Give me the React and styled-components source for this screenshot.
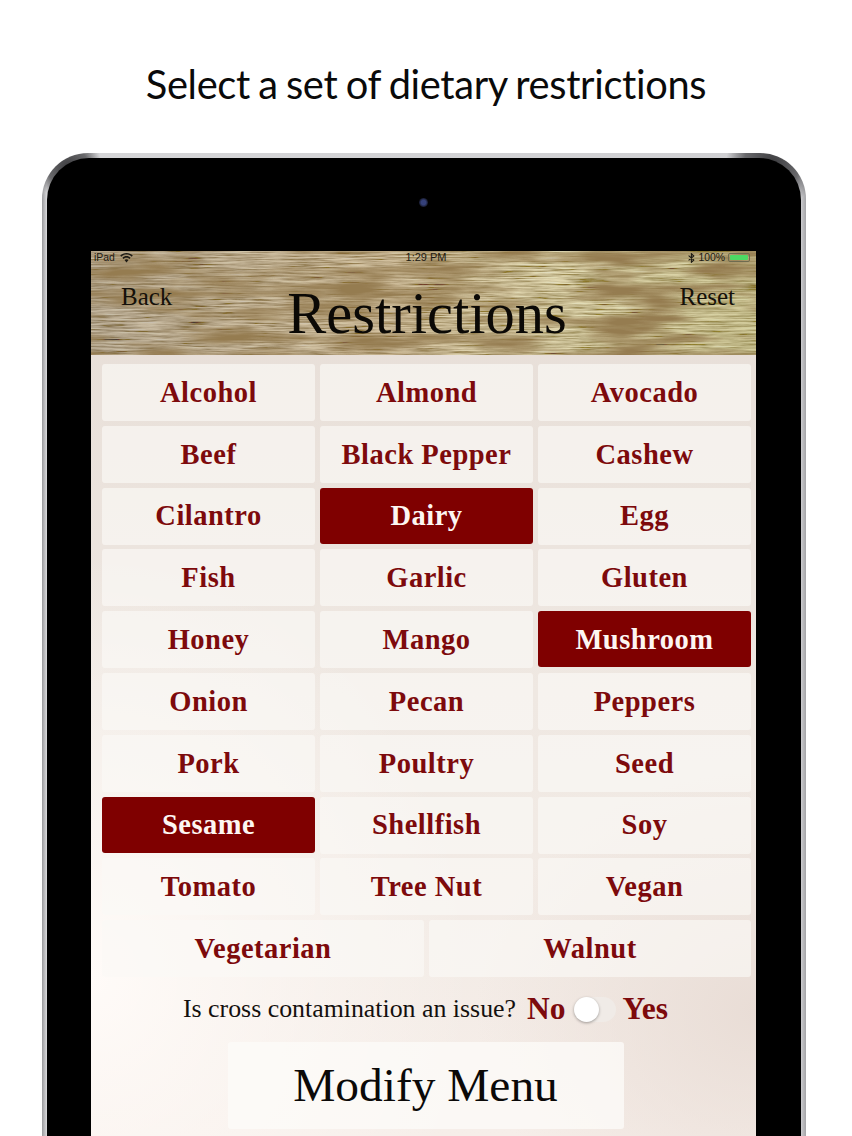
import React from "react";
import styled, { createGlobalStyle } from "styled-components";

const Global = createGlobalStyle`
  html, body { margin: 0; padding: 0; height: 1136px; overflow: hidden; background: #fff; }
  * { box-sizing: border-box; }
`;

const Page = styled.div`
  width: 852px;
  height: 1136px;
  overflow: hidden;
  background: #fff;
  display: flex;
  flex-direction: column;
  padding-left: 42px;
`;

const Caption = styled.h1`
  margin: 0 0 0 -42px;
  width: 852px;
  height: 153px;
  padding: 58px 0 0 0;
  font: 400 39.8px/52px Lato, sans-serif;
  letter-spacing: -0.35px;
  word-spacing: -1.5px;
  color: #0a0a0a;
  text-align: center;
`;

const Bezel = styled.div`
  width: 764px;
  flex: 1;
  padding: 5px 5px 0;
  border-radius: 46px 46px 0 0;
  background:
    radial-gradient(circle 34px at 26px 14px, #3c3c3f 0, rgba(60,60,63,0.7) 60%, rgba(60,60,63,0) 100%),
    radial-gradient(circle 46px at 730px 10px, #3c3c3f 0, rgba(60,60,63,0.7) 60%, rgba(60,60,63,0) 100%),
    linear-gradient(90deg, #9a9a9d 0, #d6d6d8 0.6%, #cfcfd2 99.3%, #a4a4a7 100%);
`;

const Body = styled.div`
  height: 100%;
  background: #000;
  border-radius: 42px 42px 0 0;
  padding-top: 93px;
  padding-left: 44px;
  position: relative;
`;

const Camera = styled.div`
  position: absolute;
  left: 372px;
  top: 40px;
  width: 9px;
  height: 9px;
  border-radius: 50%;
  background: radial-gradient(circle at 50% 50%, #35417a 0 35%, #171a2c 70%, #050505 100%);
`;

const Screen = styled.div`
  width: 665px;
  height: 885px;
  display: flex;
  flex-direction: column;
  background:
    radial-gradient(ellipse 380px 420px at 0% 82%, #fffbf8 0, rgba(255,251,248,0) 100%),
    radial-gradient(ellipse 280px 240px at 100% 86%, #e9ddd6 0, rgba(233,221,214,0) 100%),
    linear-gradient(180deg, #e6ddd6 0, #efe8e2 50%, #f6eee9 100%);
`;

const Header = styled.header`
  position: relative;
  height: 104px;
  flex: none;
  overflow: hidden;
  background: #a8996f;
`;

const WoodArt = styled.svg`
  position: absolute;
  inset: 0;
  width: 100%;
  height: 100%;
`;

const HeaderContent = styled.div`
  position: relative;
  height: 100%;
  display: flex;
  flex-direction: column;
`;

const StatusBar = styled.div`
  height: 13px;
  padding: 0 3px;
  display: grid;
  grid-template-columns: 1fr auto 1fr;
  align-items: center;
  font: 400 10.4px/13px "Liberation Sans", Arial, sans-serif;
  color: #1c1a14;
`;

const StatusGroup = styled.div`
  display: flex;
  align-items: center;
  gap: ${p => p.$gap || 5}px;
  justify-content: ${p => (p.$end ? "flex-end" : "flex-start")};
`;

const Clock = styled.span`
  font-size: 11px;
  padding-left: 5px;
`;

const Battery = styled.div`
  width: 22px;
  height: 9px;
  padding: 1px;
  margin-right: 3px;
  border: 1px solid #6e6b50;
  border-radius: 2px;
  display: flex;
  &::before {
    content: "";
    flex: 1;
    background: #4cd964;
    border-radius: 1px;
  }
`;

const NavRow = styled.div`
  flex: 1;
  display: grid;
  grid-template-columns: 1fr auto 1fr;
  padding: 0 21px 0 30px;
`;

const NavLink = styled.a`
  font: 400 25px/30px "Liberation Serif", serif;
  color: #15110a;
  padding-top: 18px;
  text-align: ${p => (p.$end ? "right" : "left")};
`;

const Title = styled.div`
  font: 400 58.5px/66px "Liberation Serif", serif;
  color: #0b0906;
  padding: 17px 2px 0 0;
`;

const Grid = styled.div`
  display: grid;
  grid-template-columns: repeat(6, 104px);
  grid-auto-rows: 57px;
  column-gap: 5px;
  row-gap: 4.8px;
  padding: 9px 0 0 11px;
`;

const Tile = styled.button`
  grid-column: span ${p => p.$span};
  border: 0;
  padding: 1px 0 0;
  border-radius: 3px;
  font: 700 28.5px/1 "Liberation Serif", serif;
  letter-spacing: 0.5px;
  color: ${p => (p.$on ? "#fdf6f2" : "#7d0a0c")};
  background: ${p => (p.$on ? "#7f0000" : "rgba(251,249,246,0.66)")};
  ${p => p.$on && "margin: 0 0 1px; height: 56px; padding-top: 2px;"}
`;

const Question = styled.div`
  display: flex;
  justify-content: center;
  align-items: center;
  height: 50px;
  margin-top: 7px;
  padding-left: 4px;
`;

const QuestionText = styled.span`
  font: 400 25.85px/30px "Liberation Serif", serif;
  color: #14100e;
  margin-right: 11px;
`;

const Choice = styled.span`
  font: 700 31.5px/30px "Liberation Serif", serif;
  color: #7d0a0c;
`;

const Toggle = styled.span`
  position: relative;
  width: 42px;
  height: 25px;
  margin: 0 7px 0 8px;
  border-radius: 13px;
  background: rgba(240, 236, 233, 0.8);
`;

const Knob = styled.span`
  position: absolute;
  left: 0;
  top: 0;
  width: 25px;
  height: 25px;
  border-radius: 50%;
  background: #fff;
  box-shadow: 0 1px 3px rgba(0, 0, 0, 0.35);
`;

const Primary = styled.button`
  align-self: center;
  width: 396px;
  height: 87px;
  margin: 8px 0 0 4px;
  border: 0;
  border-radius: 3px;
  background: rgba(253, 251, 249, 0.78);
  font: 400 47.4px/1 "Liberation Serif", serif;
  color: #0b0908;
  padding: 0;
`;

const rows = [
  ["Alcohol", "Almond", "Avocado"],
  ["Beef", "Black Pepper", "Cashew"],
  ["Cilantro", "Dairy", "Egg"],
  ["Fish", "Garlic", "Gluten"],
  ["Honey", "Mango", "Mushroom"],
  ["Onion", "Pecan", "Peppers"],
  ["Pork", "Poultry", "Seed"],
  ["Sesame", "Shellfish", "Soy"],
  ["Tomato", "Tree Nut", "Vegan"],
].flat();
const selected = new Set(["Dairy", "Mushroom", "Sesame"]);

const Wood = () => (
  <WoodArt viewBox="0 0 665 104" preserveAspectRatio="none" aria-hidden="true">
    <defs>
      <filter id="grain" x="0" y="0" width="100%" height="100%">
        <feTurbulence type="fractalNoise" baseFrequency="0.025 0.6" numOctaves="4" seed="11" />
        <feColorMatrix values="1.7 0 0 0 -0.2  1.7 0 0 0 -0.27  1.5 0 0 0 -0.35  0 0 0 0 1" />
      </filter>
      <filter id="blotch" x="0" y="0" width="100%" height="100%">
        <feTurbulence type="fractalNoise" baseFrequency="0.01 0.06" numOctaves="3" seed="23" />
        <feColorMatrix values="0 0 0 0 0.3  0 0 0 0 0.2  0 0 0 0 0.08  3 0 0 0 -1.25" />
      </filter>
      <linearGradient id="tone" x1="0" x2="1" y1="0" y2="0">
        <stop offset="0" stopColor="#8c7a68" stopOpacity="0.5" />
        <stop offset="0.45" stopColor="#a0835a" stopOpacity="0.45" />
        <stop offset="0.7" stopColor="#b5a86f" stopOpacity="0.4" />
        <stop offset="1" stopColor="#a8a25e" stopOpacity="0.5" />
      </linearGradient>
    </defs>
    <rect width="665" height="104" filter="url(#grain)" />
    <rect width="665" height="104" fill="url(#tone)" />
    <rect width="665" height="104" filter="url(#blotch)" />
  </WoodArt>
);

const WifiIcon = () => (
  <svg width="13" height="10" viewBox="0 0 13 10" aria-hidden="true">
    <path fill="#1c1a14" d="M6.5 0C4 0 1.8 1 .2 2.600l1.100 1.200C2.600 2.400 4.500 1.600 6.500 1.600s3.900.8 5.200 2.200l1.100-1.200C11.200 1 9 0 6.500 0z" />
    <path fill="#1c1a14" d="M6.500 3.100c-1.600 0-3 .6-4.100 1.700l1.100 1.200c.8-.8 1.900-1.300 3-1.300s2.200.5 3 1.300l1.100-1.200C9.500 3.700 8.100 3.100 6.500 3.100z" />
    <path fill="#1c1a14" d="M6.500 6.200c-.8 0-1.500.3-2 .8l2 2.400 2-2.400c-.5-.5-1.200-.8-2-.8z" />
  </svg>
);

const BluetoothIcon = () => (
  <svg width="7" height="10" viewBox="0 0 7 10" aria-hidden="true">
    <path fill="none" stroke="#1c1a14" strokeWidth="1.1" d="M.6 2.600 5.800 7 3.400 9.300V.7L5.800 3 .6 7.400" />
  </svg>
);

export default function App() {
  return (
    <Page>
      <Global />
      <Caption>Select a set of dietary restrictions</Caption>
      <Bezel>
        <Body>
          <Camera />
          <Screen>
            <Header>
              <Wood />
              <HeaderContent>
                <StatusBar>
                  <StatusGroup>
                    <span>iPad</span>
                    <WifiIcon />
                  </StatusGroup>
                  <Clock>1:29 PM</Clock>
                  <StatusGroup $end $gap={3}>
                    <BluetoothIcon />
                    <span>100%</span>
                    <Battery />
                  </StatusGroup>
                </StatusBar>
                <NavRow>
                  <NavLink>Back</NavLink>
                  <Title>Restrictions</Title>
                  <NavLink $end>Reset</NavLink>
                </NavRow>
              </HeaderContent>
            </Header>
            <Grid>
              {rows.map(name => (
                <Tile key={name} $span={2} $on={selected.has(name)}>{name}</Tile>
              ))}
              <Tile $span={3}>Vegetarian</Tile>
              <Tile $span={3}>Walnut</Tile>
            </Grid>
            <Question>
              <QuestionText>Is cross contamination an issue?</QuestionText>
              <Choice>No</Choice>
              <Toggle><Knob /></Toggle>
              <Choice>Yes</Choice>
            </Question>
            <Primary>Modify Menu</Primary>
          </Screen>
        </Body>
      </Bezel>
    </Page>
  );
}
